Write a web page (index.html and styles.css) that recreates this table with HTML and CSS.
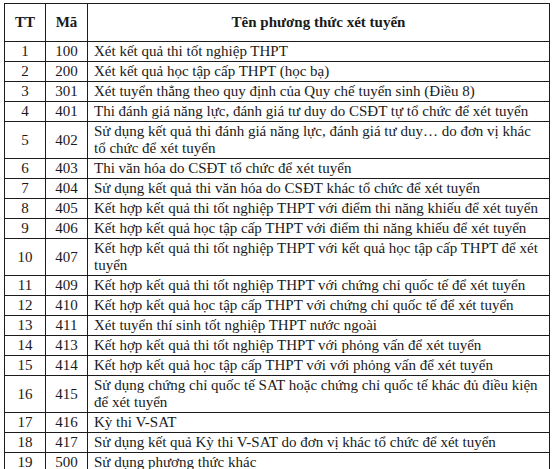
FILE: index.html
```html
<!DOCTYPE html>
<html lang="vi">
<head>
<meta charset="utf-8">
<title>Phương thức xét tuyển</title>
<link rel="stylesheet" href="styles.css">
</head>
<body>
<div class="page">
<table class="methods">
  <colgroup>
    <col class="col-tt">
    <col class="col-ma">
    <col class="col-name">
  </colgroup>
  <thead>
    <tr class="head-row">
      <th>TT</th>
      <th>Mã</th>
      <th>Tên phương thức xét tuyển</th>
    </tr>
  </thead>
  <tbody>
    <tr><td class="num">1</td><td class="num">100</td><td class="name">Xét kết quả thi tốt nghiệp THPT</td></tr>
    <tr><td class="num">2</td><td class="num">200</td><td class="name">Xét kết quả học tập cấp THPT (học bạ)</td></tr>
    <tr><td class="num">3</td><td class="num">301</td><td class="name">Xét tuyển thẳng theo quy định của Quy chế tuyển sinh (Điều 8)</td></tr>
    <tr><td class="num">4</td><td class="num">401</td><td class="name">Thi đánh giá năng lực, đánh giá tư duy do CSĐT tự tổ chức để xét tuyển</td></tr>
    <tr><td class="num">5</td><td class="num">402</td><td class="name">Sử dụng kết quả thi đánh giá năng lực, đánh giá tư duy… do đơn vị khác<br>tổ chức để xét tuyển</td></tr>
    <tr><td class="num">6</td><td class="num">403</td><td class="name">Thi văn hóa do CSĐT tổ chức để xét tuyển</td></tr>
    <tr><td class="num">7</td><td class="num">404</td><td class="name">Sử dụng kết quả thi văn hóa do CSĐT khác tổ chức để xét tuyển</td></tr>
    <tr><td class="num">8</td><td class="num">405</td><td class="name">Kết hợp kết quả thi tốt nghiệp THPT với điểm thi năng khiếu để xét tuyển</td></tr>
    <tr><td class="num">9</td><td class="num">406</td><td class="name">Kết hợp kết quả học tập cấp THPT với điểm thi năng khiếu để xét tuyển</td></tr>
    <tr><td class="num">10</td><td class="num">407</td><td class="name">Kết hợp kết quả thi tốt nghiệp THPT với kết quả học tập cấp THPT để xét<br>tuyển</td></tr>
    <tr><td class="num">11</td><td class="num">409</td><td class="name">Kết hợp kết quả thi tốt nghiệp THPT với chứng chỉ quốc tế để xét tuyển</td></tr>
    <tr><td class="num">12</td><td class="num">410</td><td class="name">Kết hợp kết quả học tập cấp THPT với chứng chỉ quốc tế để xét tuyển</td></tr>
    <tr><td class="num">13</td><td class="num">411</td><td class="name">Xét tuyển thí sinh tốt nghiệp THPT nước ngoài</td></tr>
    <tr><td class="num">14</td><td class="num">413</td><td class="name">Kết hợp kết quả thi tốt nghiệp THPT với phỏng vấn để xét tuyển</td></tr>
    <tr><td class="num">15</td><td class="num">414</td><td class="name">Kết hợp kết quả học tập cấp THPT với với phỏng vấn để xét tuyển</td></tr>
    <tr><td class="num">16</td><td class="num">415</td><td class="name">Sử dụng chứng chỉ quốc tế SAT hoặc chứng chỉ quốc tế khác đủ điều kiện<br>để xét tuyển</td></tr>
    <tr><td class="num">17</td><td class="num">416</td><td class="name">Kỳ thi V-SAT</td></tr>
    <tr><td class="num">18</td><td class="num">417</td><td class="name">Sử dụng kết quả Kỳ thi V-SAT do đơn vị khác tổ chức để xét tuyển</td></tr>
    <tr><td class="num">19</td><td class="num">500</td><td class="name">Sử dụng phương thức khác</td></tr>
  </tbody>
</table>
</div>
</body>
</html>
```

FILE: styles.css
```css
html, body {
  margin: 0;
  padding: 0;
  background: #ffffff;
}

.page {
  padding: 3px 0 0 4px;
}

.methods {
  border-collapse: collapse;
  table-layout: fixed;
  width: 545px;
  font-family: "Liberation Serif", "Times New Roman", serif;
  font-size: 15px;
  line-height: 17px;
  color: #1a1a1a;
}

.col-tt { width: 41px; }
.col-ma { width: 42px; }
.col-name { width: 462px; }

.methods th,
.methods td {
  border: 1px solid #1c1c1c;
  padding: 1px 6px;
  vertical-align: middle;
}

.head-row th {
  height: 35px;
  font-weight: bold;
  text-align: center;
}

.num {
  text-align: center;
}

.name {
  text-align: left;
  white-space: nowrap;
}
```
